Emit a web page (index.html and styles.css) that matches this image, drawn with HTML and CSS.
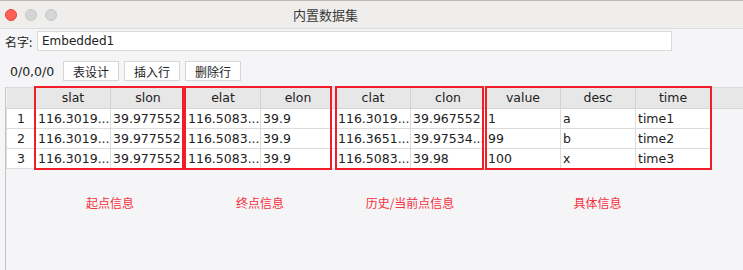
FILE: index.html
```html
<!DOCTYPE html>
<html>
	<head>
		<meta charset="utf-8">
		<title>内置数据集</title>
		<link rel="stylesheet" href="styles.css">
	</head>
	<body>
		<div class="window">
			<div class="titlebar">
				<span class="light light-close"></span>
				<span class="light"></span>
				<span class="light"></span>
				<span class="title">内置数据集</span>
			</div>
			<div class="name-row">
				<label class="name-label">名字:</label>
				<input type="text" class="name-input" value="Embedded1">
			</div>
			<div class="toolbar">
				<span class="counter">0/0,0/0</span>
				<button class="tool-btn">表设计</button>
				<button class="tool-btn">插入行</button>
				<button class="tool-btn">删除行</button>
			</div>
			<div class="pane">
				<div class="table-wrap">
					<table class="data">
						<colgroup>
							<col class="col-num">
							<col class="col"><col class="col"><col class="col">
							<col class="col"><col class="col"><col class="col">
							<col class="col"><col class="col"><col class="col">
							<col>
						</colgroup>
						<thead>
							<tr>
								<th></th>
								<th>slat</th><th>slon</th>
								<th>elat</th><th>elon</th>
								<th>clat</th><th>clon</th>
								<th>value</th><th>desc</th><th>time</th>
								<th class="fill"></th>
							</tr>
						</thead>
						<tbody>
							<tr>
								<td class="num">1</td>
								<td>116.3019...</td><td>39.977552</td>
								<td>116.5083...</td><td>39.9</td>
								<td>116.3019...</td><td>39.967552</td>
								<td>1</td><td>a</td><td>time1</td>
								<td class="fill"></td>
							</tr>
							<tr>
								<td class="num">2</td>
								<td>116.3019...</td><td>39.977552</td>
								<td>116.5083...</td><td>39.9</td>
								<td>116.3651...</td><td>39.97534...</td>
								<td>99</td><td>b</td><td>time2</td>
								<td class="fill"></td>
							</tr>
							<tr>
								<td class="num">3</td>
								<td>116.3019...</td><td>39.977552</td>
								<td>116.5083...</td><td>39.9</td>
								<td>116.5083...</td><td>39.98</td>
								<td>100</td><td>x</td><td>time3</td>
								<td class="fill"></td>
							</tr>
						</tbody>
					</table>
					<!-- 标注框 -->
					<div class="mark mark-start"></div>
					<div class="mark mark-end"></div>
					<div class="mark mark-current"></div>
					<div class="mark mark-detail"></div>
				</div>
				<div class="notes">
					<span></span>
					<span class="note">起点信息</span>
					<span class="note">终点信息</span>
					<span class="note">历史/当前点信息</span>
					<span class="note">具体信息</span>
				</div>
			</div>
		</div>
	</body>
</html>
```

FILE: styles.css
```css
* {
	box-sizing: border-box;
}
body {
	margin: 0;
	font-family: "DejaVu Sans", "Noto Sans CJK SC", sans-serif;
	color: #222;
}
.window {
	width: 743px;
	height: 270px;
	overflow: hidden;
	display: flex;
	flex-direction: column;
	background-color: #f5f5f7;
	border-top: 1px solid #b8b8b8;
}
.titlebar {
	height: 28px;
	display: flex;
	align-items: center;
	padding-left: 5px;
	background-color: #efeeed;
	border-bottom: 1px solid #dcdcdc;
}
.light {
	width: 12px;
	height: 12px;
	border-radius: 50%;
	margin-right: 8px;
	background-color: #d6d6d6;
	border: 1px solid #c6c6c6;
}
.light-close {
	background-color: #fe5f57;
	border-color: #e2463f;
}
.title {
	margin-left: 228px;
	font-family: "Noto Sans CJK SC", sans-serif;
	font-size: 13px;
	color: #3a3a3a;
}
.name-row {
	display: flex;
	align-items: center;
	padding-left: 5px;
	margin-top: 2px;
}
.name-label {
	width: 32px;
	font-family: "Noto Sans CJK SC", sans-serif;
	font-size: 12px;
	color: #222;
}
.name-input {
	width: 635px;
	height: 20px;
	padding: 0 4px;
	border: 1px solid #dadada;
	background-color: #fff;
	font-family: "DejaVu Sans", sans-serif;
	font-size: 12px;
	color: #222;
	outline: none;
}
.toolbar {
	display: flex;
	align-items: center;
	margin-top: 10px;
	padding-left: 10px;
}
.counter {
	width: 53px;
	font-size: 12.5px;
}
.tool-btn {
	width: 56px;
	height: 20px;
	margin-right: 5px;
	padding: 0;
	border: 1px solid #d6d6d6;
	background-color: #fff;
	font-family: "Noto Sans CJK SC", sans-serif;
	font-size: 12px;
	color: #222;
}
.pane {
	flex: 1;
	margin-top: 6px;
	margin-left: 5px;
	border-left: 1px solid #c4c4c4;
	border-top: 1px solid #dadada;
}
.table-wrap {
	position: relative;
}
.data {
	width: 100%;
	table-layout: fixed;
	border-collapse: collapse;
	font-size: 12.5px;
}
.col-num {
	width: 29px;
}
.col {
	width: 75px;
}
.data th {
	height: 20px;
	padding: 0;
	font-weight: normal;
	text-align: center;
	background-color: #e7e7e7;
	border-right: 1px solid #d2d2d2;
	border-bottom: 1px solid #d6d6d6;
}
.data th.fill {
	border-right: none;
}
.data td {
	height: 20px;
	padding: 0 2px;
	white-space: nowrap;
	overflow: hidden;
	background-color: #fff;
	border: 1px solid #dcdcdc;
}
.data td.num {
	text-align: center;
}
.data td.fill {
	background-color: transparent;
	border: none;
}
.mark {
	position: absolute;
	top: -2px;
	height: 84px;
	border: 2px solid #f11d28;
}
.mark-start {
	left: 28px;
	width: 150px;
}
.mark-end {
	left: 178px;
	width: 148px;
}
.mark-current {
	left: 329px;
	width: 149px;
}
.mark-detail {
	left: 479px;
	width: 227px;
}
.notes {
	display: grid;
	grid-template-columns: 29px 150px 150px 150px 225px;
	margin-top: 25px;
}
.note {
	text-align: center;
	font-family: "Noto Sans CJK SC", sans-serif;
	font-size: 12px;
	color: #f5323e;
}
```
